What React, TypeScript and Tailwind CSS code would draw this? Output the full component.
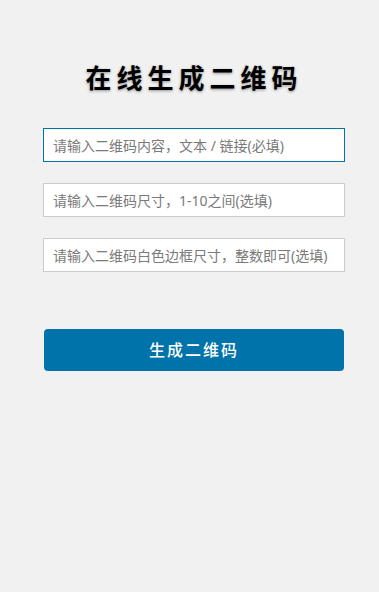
import { useState } from "react";

const QrGeneratorForm = () => {
  const [content, setContent] = useState("");
  const [size, setSize] = useState("");
  const [margin, setMargin] = useState("");

  const inputBase =
    "block w-full h-[34px] px-[9px] bg-white text-[14px] text-[#32373c] placeholder:text-[#7a7a7a] outline-none border";

  return (
    <div className="min-h-[592px] w-full bg-[#f1f1f1] font-['Noto_Sans','Noto_Sans_CJK_SC',sans-serif]">
      <div className="pl-[43px] pr-[34px] pt-[60px]">
        <h1 className="h-[36px] text-center text-[26px] leading-[36px] font-bold tracking-[5px] text-black [text-shadow:0_1px_3px_rgba(0,0,0,0.4)]">
          在线生成二维码
        </h1>

        <div className="mt-[32px] flex flex-col gap-[21px]">
          <input
            autoFocus
            value={content}
            onChange={(e) => setContent(e.target.value)}
            placeholder="请输入二维码内容，文本 / 链接(必填)"
            className={`${inputBase} border-[#0073aa]`}
          />
          <input
            value={size}
            onChange={(e) => setSize(e.target.value)}
            placeholder="请输入二维码尺寸，1-10之间(选填)"
            className={`${inputBase} border-[#cccccc]`}
          />
          <input
            value={margin}
            onChange={(e) => setMargin(e.target.value)}
            placeholder="请输入二维码白色边框尺寸，整数即可(选填)"
            className={`${inputBase} border-[#cccccc]`}
          />
        </div>

        <button
          type="button"
          className="mt-[57px] mx-px block w-[calc(100%-2px)] h-[42px] rounded-[4px] bg-[#0073aa] text-white text-[16px] font-medium tracking-[2px]"
        >
          生成二维码
        </button>
      </div>
    </div>
  );
};

export default function App() {
  return <QrGeneratorForm />;
}
